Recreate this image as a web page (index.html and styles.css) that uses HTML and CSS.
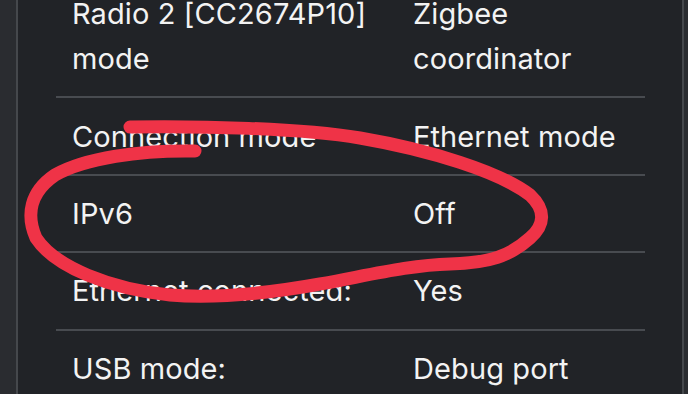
FILE: index.html
```html
<!DOCTYPE html>
<html lang="en">
<head>
<meta charset="utf-8">
<title>Network info</title>
<link rel="stylesheet" href="styles.css">
</head>
<body>
<div class="page">
  <div class="card">
    <div class="table">
      <div class="row">
        <div class="cell key">Radio 2 [CC2674P10] mode</div>
        <div class="cell val">Zigbee coordinator</div>
      </div>
      <div class="row">
        <div class="cell key">Connection mode</div>
        <div class="cell val">Ethernet mode</div>
      </div>
      <div class="row">
        <div class="cell key">IPv6</div>
        <div class="cell val">Off</div>
      </div>
      <div class="row">
        <div class="cell key">Ethernet connected:</div>
        <div class="cell val">Yes</div>
      </div>
      <div class="row">
        <div class="cell key">USB mode:</div>
        <div class="cell val">Debug port</div>
      </div>
    </div>
  </div>
  <svg class="annotation" viewBox="0 0 688 394" width="688" height="394" aria-hidden="true">
    <path class="ink" d="M130 127 C 200 126, 300 128, 360 138 C 430 150, 500 172, 530 195 C 546 210, 545 225, 530 238 C 510 256, 490 263, 450 264 C 410 265, 370 275, 320 284 C 270 293, 220 299, 170 295 C 110 289, 55 267, 36 238 C 26 215, 30 192, 55 175 C 85 158, 140 150, 195 151"/>
  </svg>
</div>
</body>
</html>
```
FILE: styles.css
```css
html, body {
  margin: 0;
  padding: 0;
  background: #2a2c30;
  overflow: hidden;
}

.page {
  position: relative;
  width: 688px;
  height: 394px;
  overflow: hidden;
  font-family: Inter, "Noto Sans", "Liberation Sans", sans-serif;
}

.card {
  margin: -24px 4px 0 16px;
  background: #212327;
  border-left: 2px solid #45484c;
  border-right: 2px solid #45484c;
  padding: 0 37px 0 38px;
  min-height: 430px;
}

.table {
  display: flex;
  flex-direction: column;
}

.row {
  display: grid;
  grid-template-columns: 341px 1fr;
  border-bottom: 2px solid #484b50;
}

.cell {
  padding: 15.2px 16px;
  font-size: 29px;
  line-height: 45px;
  color: #f3f3f3;
  letter-spacing: 0.1px;
}

.annotation {
  position: absolute;
  left: 0;
  top: 0;
  pointer-events: none;
}

.ink {
  fill: none;
  stroke: #ef3347;
  stroke-width: 13;
  stroke-linecap: round;
  stroke-linejoin: round;
}
```
